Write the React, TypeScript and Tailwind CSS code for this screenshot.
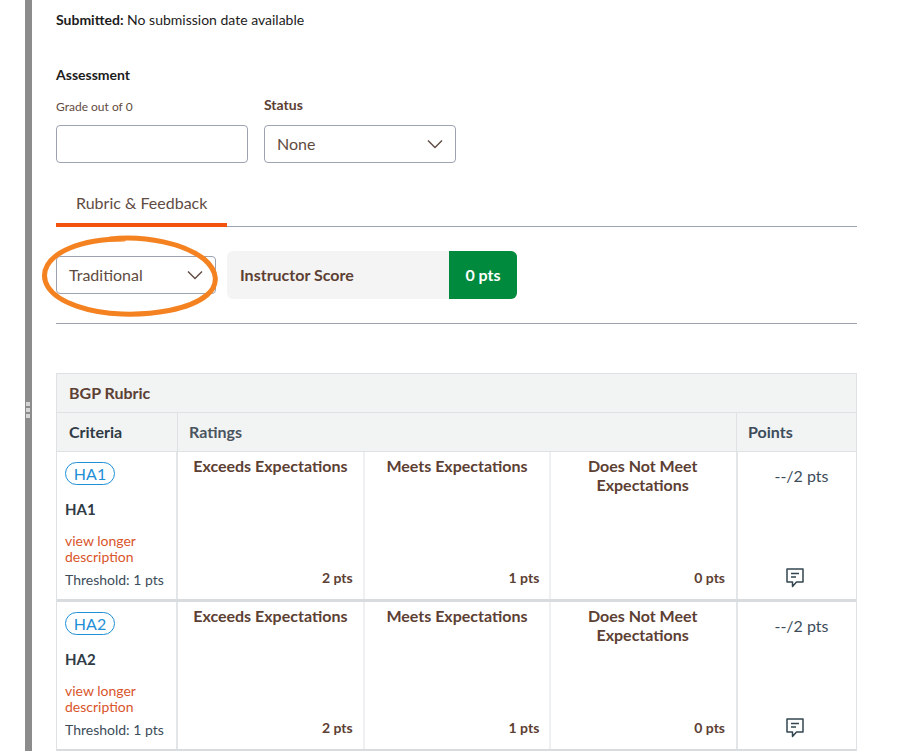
import React from "react";

const ChevronDown: React.FC = () => (
  <svg width="16" height="10" viewBox="0 0 16 10" fill="none" stroke="#5f4b42" strokeWidth="1.4">
    <path d="M1 1.5 L8 8.5 L15 1.5" />
  </svg>
);

const CommentIcon: React.FC = () => (
  <svg width="18" height="20" viewBox="0 0 18 20" fill="none" stroke="#33464f" strokeWidth="1.5">
    <path d="M1 1 H17 V14 H10.5 L6.5 18.5 V14 H1 Z" strokeLinejoin="round" />
    <path d="M5 5.5 H13 M5 9 H10" />
  </svg>
);

const Select: React.FC<{ label: string; className?: string }> = ({ label, className = "" }) => (
  <div className={`h-[38px] flex items-center justify-between pl-[12px] pr-3 bg-white border border-[#9ca3af] rounded-[4px] text-[16px] text-[#5f4b42] ${className}`}>
    <span>{label}</span>
    <ChevronDown />
  </div>
);

const RatingCell: React.FC<{ title: React.ReactNode; pts: string; last?: boolean }> = ({ title, pts, last }) => (
  <div className={`flex-1 flex flex-col justify-between pt-[4px] pb-[12px] ${last ? "" : "border-r-2 border-[#eef0f2]"}`}>
    <div className={`text-center text-[16px] leading-[19px] font-bold text-[#5c4033] ${last ? "pr-[2px]" : ""}`}>{title}</div>
    <div className={`text-right text-[14px] leading-[18px] font-bold text-[#5c4033] ${last ? "pr-[11px]" : "pr-[10px]"}`}>{pts}</div>
  </div>
);

const CriteriaRow: React.FC<{ code: string }> = ({ code }) => (
  <div className="flex h-[150px] border-b-[3px] border-[#d9dcdf]">
    <div className="w-[121px] shrink-0 border-r-2 border-[#e3e6e9] pl-[8px] pt-[10px]">
      <div className="w-[50px] h-[23px] rounded-full border border-[#1f8fd6] flex items-center justify-center text-[16px] text-[#1f8fd6]">
        {code}
      </div>
      <div className="mt-[14px] text-[15px] leading-[20px] font-bold text-[#2f3b45]">{code}</div>
      <div className="mt-[14px] text-[14px] leading-[16px] text-[#d9552b]">
        view longer
        <br />
        description
      </div>
      <div className="mt-[6px] text-[14px] leading-[18px] text-[#3c4c5a]">Threshold: 1 pts</div>
    </div>
    <div className="flex w-[558px] shrink-0">
      <RatingCell title="Exceeds Expectations" pts="2 pts" />
      <RatingCell title="Meets Expectations" pts="1 pts" />
      <RatingCell
        title={
          <>
            Does Not Meet
            <br />
            Expectations
          </>
        }
        pts="0 pts"
        last
      />
    </div>
    <div className="flex-1 border-l-2 border-[#e3e6e9] flex flex-col items-center justify-between pt-[14px] pb-[11px]">
      <div className="text-[16px] leading-[20px] text-[#3c4c5a] pl-[9px]">--/2 pts</div>
      <div className="pr-[5px] flex">
        <CommentIcon />
      </div>
    </div>
  </div>
);

export default function App() {
  return (
    <div className="relative w-[898px] h-[751px] overflow-hidden bg-white flex font-['Lato','Open_Sans',sans-serif]">
      {/* Splitter */}
      <div className="ml-[25px] w-[7px] h-full bg-[#8c8c8c] shrink-0 flex flex-col items-center justify-center">
        <div className="flex flex-col gap-[2px] mt-[69px] ml-[-1px]">
          <div className="w-[4px] h-[4px] bg-[#d5d5d5]" />
          <div className="w-[4px] h-[4px] bg-[#d5d5d5]" />
          <div className="w-[4px] h-[4px] bg-[#d5d5d5]" />
        </div>
      </div>

      <div className="ml-[24px] w-[801px] shrink-0">
        <div className="mt-[10px] text-[14px] leading-[19px] text-[#1c1c1c]">
          <span className="font-bold">Submitted:</span> No submission date available
        </div>

        <div className="mt-[36px] text-[14px] leading-[20px] font-bold text-[#1c1c1c]">Assessment</div>

        <div className="mt-[10px] flex gap-[16px]">
          <div className="w-[192px]">
            <div className="mt-[4px] h-[16px] text-[12px] leading-[16px] text-[#5f4b42]">Grade out of 0</div>
            <div className="mt-[10px] h-[38px] bg-white border border-[#9ca3af] rounded-[4px]" />
          </div>
          <div className="w-[192px]">
            <div className="h-[20px] text-[14px] leading-[20px] font-bold text-[#5c4033]">Status</div>
            <Select label="None" className="mt-[10px]" />
          </div>
        </div>

        {/* Tabs */}
        <div className="mt-[20px] h-[44px] border-b border-[#9ca3af] relative">
          <div className="w-[171px] h-[44px] pl-[20px] pt-[10px] border-b-[4px] border-[#f25410] text-[16px] leading-[20px] text-[#5f4b42]">
            Rubric &amp; Feedback
          </div>
        </div>

        {/* Score row */}
        <div className="mt-[24px] flex items-center gap-[11px] pb-[24px] border-b border-[#9ca3af]">
          <Select label="Traditional" className="w-[160px]" />
          <div className="w-[290px] h-[48px] flex rounded-[6px] bg-[#f4f4f4] overflow-hidden">
            <div className="flex-1 flex items-center pl-[13px] text-[16px] font-bold text-[#5c4033]">Instructor Score</div>
            <div className="w-[68px] flex items-center justify-center bg-[#008a3e] text-[16px] font-bold text-white">0 pts</div>
          </div>
        </div>

        {/* Rubric table */}
        <div className="mt-[49px] border-x border-t border-[#dfe2e5]">
          <div className="h-[39px] flex items-center pl-[12px] bg-[#f2f3f3] border-b border-[#dfe2e5] text-[16px] font-bold text-[#5c4033]">
            BGP Rubric
          </div>
          <div className="h-[39px] flex bg-[#f2f3f3] border-b border-[#dfe2e5] text-[16px]">
            <div className="w-[121px] shrink-0 flex items-center pl-[12px] border-r border-[#dfe2e5] font-bold text-[#2f3b45]">Criteria</div>
            <div className="w-[558px] shrink-0 flex items-center pl-[11px] font-bold text-[#4a5560]">Ratings</div>
            <div className="flex-1 flex items-center pl-[11px] border-l border-[#dfe2e5] font-bold text-[#3c4c5a]">Points</div>
          </div>
          <CriteriaRow code="HA1" />
          <CriteriaRow code="HA2" />
        </div>
      </div>

      {/* Hand-drawn highlight round the view selector */}
      <svg className="absolute left-[40px] top-[235px] pointer-events-none" width="182" height="84" viewBox="0 0 182 84" fill="none">
        <path
          d="M70 4 C106 0 145 9 164 24 C178 36 179 50 167 60 C149 75 112 80 82 79 C50 78 18 68 8 52 C-1 37 8 22 30 13 C44 7 60 4 84 4"
          stroke="#f58220"
          strokeWidth="5"
          strokeLinecap="round"
        />
      </svg>
    </div>
  );
}
